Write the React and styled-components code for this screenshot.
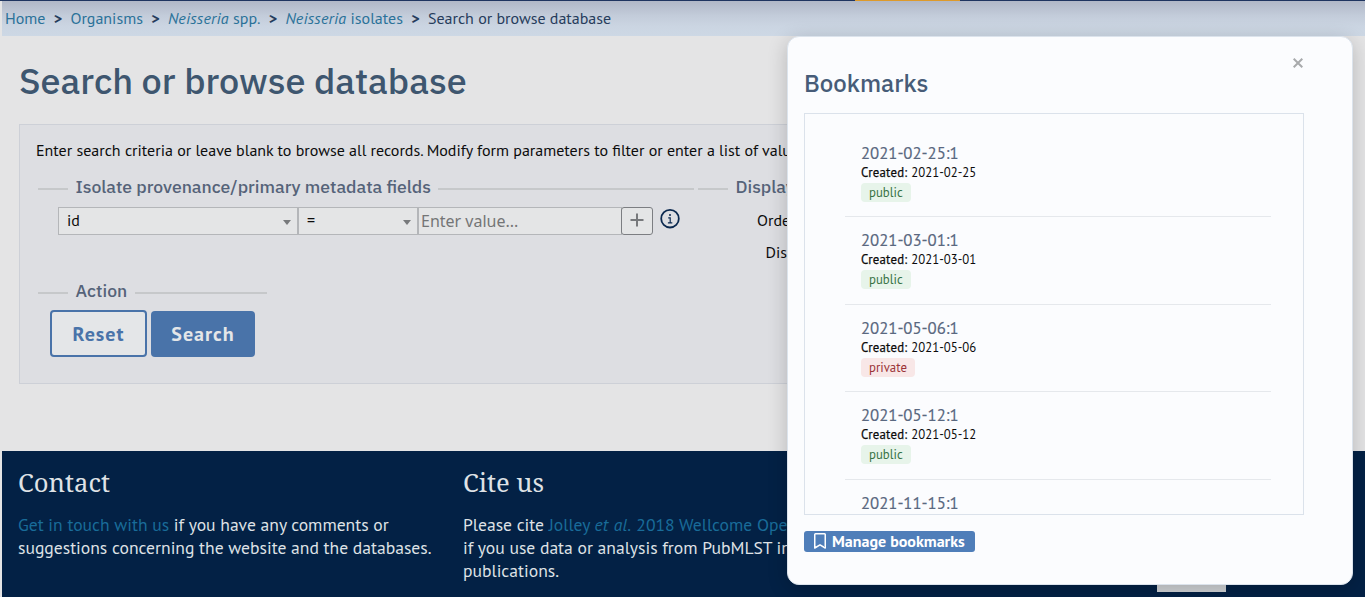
import styled, { createGlobalStyle } from "styled-components";

const GlobalStyle = createGlobalStyle`
  * {
    box-sizing: border-box;
  }
  body {
    margin: 0;
    background: #e4e4e5;
    font-family: "PT Sans", "Noto Sans", sans-serif;
    font-size: 16px;
    color: #0c0c0c;
    overflow: hidden;
  }
`;

const Page = styled.div`
  position: relative;
  height: 597px;
  padding-left: 2px;
  overflow: hidden;
`;
const NavEdge = styled.div`
  display: flex;
  height: 1px;
  margin-left: -2px;
  padding-left: 855px;
  background: #1f3560;
`;
const ActiveTab = styled.div`
  width: 105px;
  background: #dd9a2b;
`;
const Breadcrumbs = styled.nav`
  display: flex;
  height: 35px;
  padding-left: 3px;
  line-height: 34px;
  white-space: pre;
  color: #263c5c;
  background: linear-gradient(#b1b8c7 0, #b7bfce 15%, #c3ccda 42%, #cbd5e2 72%, #cdd8e5 100%);
`;
const Crumb = styled.a`
  color: #2b7299;

  i {
    letter-spacing: 0.2px;
  }
`;
const Separator = styled.span`
  width: 25px;
  text-align: center;
  font-weight: 600;
`;
const Title = styled.h1`
  margin: 21px 0 0 17px;
  height: 48px;
  line-height: 48px;
  font-family: "IBM Plex Sans", "Noto Sans", sans-serif;
  font-size: 36px;
  font-weight: 500;
  color: #3e566f;
`;

const SearchBox = styled.div`
  width: 1310px;
  height: 260px;
  margin: 19px 0 0 17px;
  padding: 15px 16px 0;
  border: 1px solid #cdd0d7;
  background: #dddee2;
`;
const Intro = styled.p`
  margin: 0;
  line-height: 20px;
  white-space: nowrap;
`;
const Fieldsets = styled.div`
  display: flex;
  gap: 4px;
  margin: 15px 0 0 2px;
  height: 94px;
`;
const Fieldset = styled.div`
  width: ${(p) => p.$width}px;
`;
const Legend = styled.div`
  display: flex;
  align-items: center;
  gap: 7.5px;
  height: 24px;
  padding-bottom: 2px;
  font-family: "IBM Plex Sans", "Noto Sans", sans-serif;
  font-size: 17.6px;
  font-weight: 500;
  color: #556379;
  white-space: nowrap;

  &::before,
  &::after {
    content: "";
    width: 30px;
    height: 2px;
    margin-top: 5px;
    background: #c6c8ca;
  }
  &::after {
    flex: 1;
  }
`;
const Criteria = styled.div`
  display: flex;
  margin: 8px 0 0 20px;
`;
const Select = styled.div`
  display: flex;
  align-items: center;
  justify-content: space-between;
  width: ${(p) => p.$width}px;
  height: 28px;
  padding: 0 6px 2px 8px;
  border: 1px solid #b4b6b9;
  background: #e4e5e6;

  &::after {
    content: "";
    margin-top: 4px;
    border: 4px solid transparent;
    border-top: 5px solid #77797b;
    border-bottom: 0;
  }
`;
const ValueInput = styled.input`
  width: 204px;
  height: 28px;
  padding: 0 2px;
  border: 1px solid #b4b6b9;
  background: #e4e5e6;
  font-family: "Noto Sans", sans-serif;
  font-size: 16px;

  &::placeholder {
    color: #747576;
  }
`;
const AddButton = styled.button`
  display: flex;
  align-items: center;
  justify-content: center;
  width: 32px;
  height: 28px;
  margin-left: -1px;
  padding: 0 0 2px;
  border: 1px solid #7c7e82;
  border-radius: 3px;
  background: #e4e5e6;
`;
const InfoIcon = styled.svg`
  width: 20px;
  height: 20px;
  margin: 2px 0 0 7px;
`;
const DisplayRow = styled.div`
  height: 32px;
  margin-top: ${(p) => (p.$first ? 8 : 0)}px;
  padding-left: ${(p) => p.$indent}px;
  line-height: 26px;
  white-space: nowrap;
`;
const Action = styled.div`
  width: 229px;
  margin: 10px 0 0 2px;
`;
const Buttons = styled.div`
  display: flex;
  align-items: flex-end;
  gap: 4px;
  margin: 7px 0 0 12px;
`;
const Button = styled.button`
  width: ${(p) => (p.$primary ? 104 : 97)}px;
  height: ${(p) => (p.$primary ? 46 : 47)}px;
  padding: ${(p) => (p.$primary ? "0 0 1px" : "1px 0 0")};
  border: ${(p) => (p.$primary ? "0" : "2px solid #4973a9")};
  border-radius: 4px;
  background: ${(p) => (p.$primary ? "#4973a9" : "#e4e6e8")};
  color: ${(p) => (p.$primary ? "#e4e6e8" : "#4973a9")};
  font-family: "PT Sans", "Noto Sans", sans-serif;
  font-size: 20px;
  font-weight: 700;
  letter-spacing: 1px;
`;

const Footer = styled.footer`
  display: grid;
  grid-template-columns: 445px 445px 1fr;
  height: 146px;
  margin-top: 67px;
  padding-left: 16px;
  background: #032145;
  color: #dfe2e6;
`;
const FooterTitle = styled.h2`
  margin: 16px 0 14px;
  height: 32px;
  line-height: 32px;
  font-family: "Noto Serif", "DejaVu Serif", serif;
  font-size: 25.6px;
  font-weight: 400;
`;
const FooterText = styled.p`
  margin: 0;
  line-height: 23px;
  font-size: 17.6px;
  white-space: nowrap;
`;
const FooterLink = styled.a`
  color: #196c99;

  i {
    letter-spacing: 0.3px;
  }
`;
const Partner = styled.div`
  width: 69px;
  height: 60px;
  margin: 81px 0 0 249px;
  background: #cfd2d5;
`;

const Dialog = styled.section`
  position: absolute;
  top: 36px;
  left: 787px;
  width: 566px;
  height: 549px;
  padding: 31px 16px 0;
  border: 1px solid #dbe3ec;
  border-radius: 12px;
  background: #fbfcfe;
  box-shadow: 0 4px 20px rgba(0, 0, 0, 0.2);
`;
const Close = styled.svg`
  position: absolute;
  top: 21px;
  left: 505px;
  width: 10px;
  height: 10px;
`;
const DialogTitle = styled.h2`
  margin: 0 0 13px;
  height: 32px;
  line-height: 30px;
  font-family: "IBM Plex Sans", "Noto Sans", sans-serif;
  font-size: 24px;
  font-weight: 500;
  color: #475c78;
`;
const List = styled.ul`
  width: 500px;
  height: 402px;
  margin: 0;
  padding: 15.5px 32px 0 40px;
  border: 1px solid #dbe2eb;
  overflow: hidden;
  list-style: none;
`;
const Item = styled.li`
  height: 87.5px;
  padding: 14.2px 16px 0;
  border-bottom: 1px solid #e5e8ec;
`;
const BookmarkLink = styled.a`
  display: block;
  height: 19px;
  line-height: 18px;
  font-size: 16.8px;
  letter-spacing: -0.05px;
  -webkit-text-stroke: 0.15px;
  color: #5a6880;
`;
const Created = styled.div`
  height: 19px;
  line-height: 19px;
  font-size: 12.8px;
`;
const Label = styled.span`
  display: inline-block;
  width: 50.3px;
  letter-spacing: 0.2px;
  -webkit-text-stroke: 0.25px;
`;
const Badge = styled.span`
  display: block;
  width: fit-content;
  height: 19px;
  margin-top: 1.3px;
  padding: 0 8px;
  border-radius: 4px;
  line-height: 19.5px;
  font-size: 12.8px;
  background: ${(p) => (p.$kind === "public" ? "#e7f4ea" : "#f8e7e7")};
  color: ${(p) => (p.$kind === "public" ? "#377345" : "#9b3438")};
`;
const ManageButton = styled.button`
  display: flex;
  align-items: center;
  gap: 6px;
  width: 171px;
  height: 21px;
  margin-top: 16px;
  padding: 0 10px 2px;
  border: 0;
  border-radius: 3px;
  background: #4f7eb9;
  color: #fff;
  font-family: "PT Sans", "Noto Sans", sans-serif;
  font-size: 16px;
  font-weight: 700;
  white-space: nowrap;

  svg {
    margin-top: 1px;
  }
`;

const bookmarks = [
  { date: "2021-02-25", kind: "public" },
  { date: "2021-03-01", kind: "public" },
  { date: "2021-05-06", kind: "private" },
  { date: "2021-05-12", kind: "public" },
  { date: "2021-11-15" },
];

const Bookmarks = () => {
  return (
    <Dialog>
      <Close viewBox="0 0 10 10" stroke="#a8aaac" strokeWidth="2">
        <path d="M0.7 0.7L9.3 9.3M9.3 0.7L0.7 9.3" />
      </Close>
      <DialogTitle>Bookmarks</DialogTitle>
      <List>
        {bookmarks.map((b) => (
          <Item key={b.date}>
            <BookmarkLink>{b.date}:1</BookmarkLink>
            {b.kind && (
              <>
                <Created>
                  <Label>Created:</Label>
                  {b.date}
                </Created>
                <Badge $kind={b.kind}>{b.kind}</Badge>
              </>
            )}
          </Item>
        ))}
      </List>
      <ManageButton>
        <svg width="12" height="16" viewBox="0 0 12 16" fill="none" stroke="#fff" strokeWidth="1.5">
          <path d="M0.75 15V1.5Q0.75 0.75 1.5 0.75H10.5Q11.25 0.75 11.25 1.5V15L6 11.8Z" strokeLinejoin="round" />
        </svg>
        Manage bookmarks
      </ManageButton>
    </Dialog>
  );
};

const App = () => {
  return (
    <Page>
      <GlobalStyle />
      <NavEdge>
        <ActiveTab />
      </NavEdge>
      <Breadcrumbs>
        <Crumb>Home</Crumb>
        <Separator>&gt;</Separator>
        <Crumb>Organisms</Crumb>
        <Separator>&gt;</Separator>
        <Crumb>
          <i>Neisseria</i> spp.
        </Crumb>
        <Separator>&gt;</Separator>
        <Crumb>
          <i>Neisseria</i> isolates
        </Crumb>
        <Separator>&gt;</Separator>
        <span>Search or browse database</span>
      </Breadcrumbs>
      <Title>Search or browse database</Title>
      <SearchBox>
        <Intro>
          Enter search criteria or leave blank to browse all records. Modify form
          parameters to filter or enter a list of values.
        </Intro>
        <Fieldsets>
          <Fieldset $width={656}>
            <Legend>Isolate provenance/primary metadata fields</Legend>
            <Criteria>
              <Select $width={240}>id</Select>
              <Select $width={120}>=</Select>
              <ValueInput placeholder="Enter value..." />
              <AddButton>
                <svg width="14" height="14" viewBox="0 0 14 14" stroke="#77797c" strokeWidth="2">
                  <path d="M7 0.5V13.5M0.5 7H13.5" />
                </svg>
              </AddButton>
              <InfoIcon viewBox="0 0 20 20" fill="none" stroke="#0b294f">
                <circle cx="10" cy="9.7" r="8.8" strokeWidth="1.8" />
                <path d="M8.2 8.9H10.2V13.6M7.9 13.8H12.3" strokeWidth="1.2" />
                <circle cx="10" cy="6.1" r="1" fill="#0b294f" stroke="none" />
              </InfoIcon>
            </Criteria>
          </Fieldset>
          <Fieldset $width={400}>
            <Legend>Display</Legend>
            <DisplayRow $first $indent={59}>Order by:</DisplayRow>
            <DisplayRow $indent={67.5}>Display:</DisplayRow>
          </Fieldset>
        </Fieldsets>
        <Action>
          <Legend>Action</Legend>
          <Buttons>
            <Button>Reset</Button>
            <Button $primary>Search</Button>
          </Buttons>
        </Action>
      </SearchBox>
      <Footer>
        <div>
          <FooterTitle>Contact</FooterTitle>
          <FooterText>
            <FooterLink>Get in touch with us</FooterLink> if you have any comments or
            <br />
            suggestions concerning the website and the databases.
          </FooterText>
        </div>
        <div>
          <FooterTitle>Cite us</FooterTitle>
          <FooterText>
            Please cite{" "}
            <FooterLink>
              Jolley <i>et al.</i> 2018 Wellcome Open Res
            </FooterLink>
            <br />
            if you use data or analysis from PubMLST in your
            <br />
            publications.
          </FooterText>
        </div>
        <Partner />
      </Footer>
      <Bookmarks />
    </Page>
  );
};

export default App;
